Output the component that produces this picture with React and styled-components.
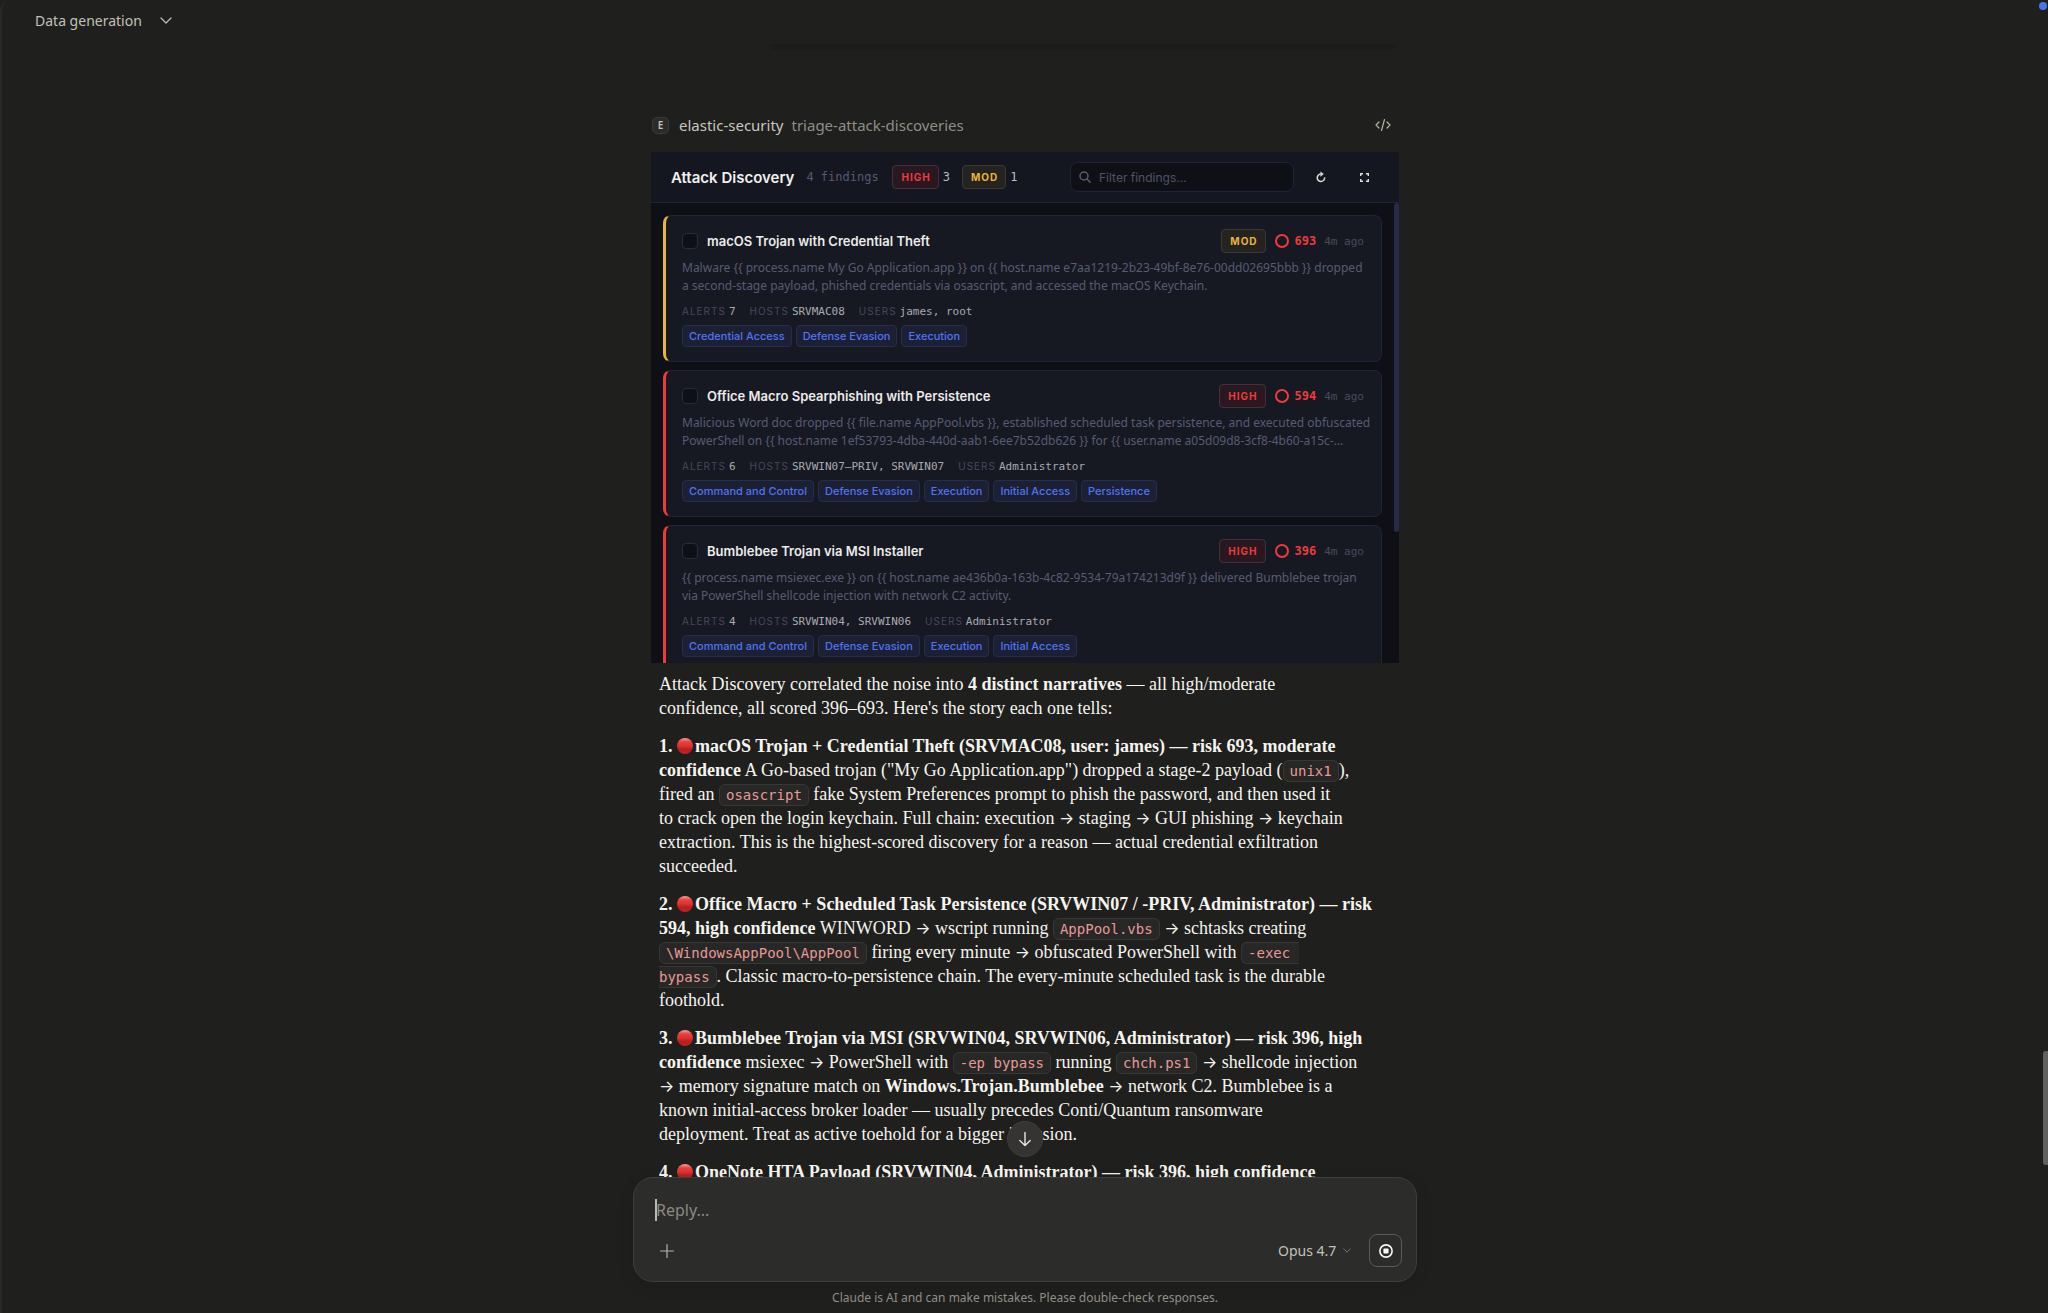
import React from "react";
import styled, { createGlobalStyle } from "styled-components";

const ui = '"Noto Sans", "Liberation Sans", sans-serif';
const inter = 'Inter, "Liberation Sans", sans-serif';
const serif = '"Liberation Serif", "Noto Sans", serif';
const mono = '"DejaVu Sans Mono", "Liberation Mono", monospace';

const Global = createGlobalStyle`
  * { box-sizing: border-box; }
  body { margin: 0; background: #1f1f1d; color: #f5f4ee; font-family: ${ui}; }
  button, input, textarea, select { font: inherit; color: inherit; margin: 0; }
  button { border: 0; padding: 0; background: none; cursor: pointer; }
  svg { display: block; }
`;

const Page = styled.div`
  position: relative;
  height: 100vh;
  display: flex;
  flex-direction: column;
  overflow: hidden;
  border-left: 2px solid #292927;
  border-top-left-radius: 10px;
  background: #1f1f1d;
`;

const TopBar = styled.header`
  flex: none;
  height: 41px;
  padding-left: 33px;
  display: flex;
  align-items: center;
`;

const ChatTitle = styled.button`
  display: flex;
  align-items: center;
  gap: 18px;
  font-size: 14px;
  line-height: 20px;
  color: #c3c1b8;
`;

const StatusDot = styled.span`
  position: absolute;
  top: 2px;
  right: 1px;
  width: 8px;
  height: 8px;
  border-radius: 50%;
  background: #4f72ea;
`;

const ScrollThumb = styled.span`
  position: absolute;
  right: 0;
  top: 1051px;
  width: 5px;
  height: 114px;
  border-radius: 3px 0 0 3px;
  background: #62615e;
`;

const Thread = styled.main`
  flex: 1;
  min-height: 0;
  overflow: hidden;
  display: flex;
  justify-content: center;
`;

const Column = styled.div`
  width: 784px;
  max-width: 100%;
  padding: 3px 18px 0;
`;

const BubbleEdge = styled.div`
  height: 6px;
  margin: 0 2px 61px 118px;
  border-radius: 0 0 6px 6px;
  background: #1c1c1d;
`;

const ToolRow = styled.div`
  height: 28px;
  margin-bottom: 13px;
  padding: 0 8px 0 1px;
  display: flex;
  align-items: center;
  font-size: 15px;
  line-height: 20px;
`;

const ToolBadge = styled.span`
  width: 17px;
  height: 17px;
  margin-right: 10px;
  border: 1px solid #3a3a37;
  border-radius: 5px;
  background: #2b2b29;
  color: #c3c1b8;
  font-size: 10px;
  font-weight: 600;
  line-height: 15px;
  text-align: center;
`;

const ToolServer = styled.span`
  margin-right: 8px;
  color: #c8c6bd;
`;

const ToolName = styled.span`
  color: #8f8e87;
`;

const IconButton = styled.button`
  display: grid;
  place-items: center;
  width: ${(p) => p.$size || 20}px;
  height: ${(p) => p.$size || 20}px;
  margin-left: ${(p) => (p.$end ? "auto" : 0)};
  color: ${(p) => p.$color || "#b5b3aa"};
`;

const Widget = styled.section`
  height: 511px;
  display: flex;
  flex-direction: column;
  overflow: hidden;
  background: #0f1015;
  font-family: ${inter};
`;

const WidgetHeader = styled.header`
  flex: none;
  height: 51px;
  padding: 0 25px 0 20px;
  display: flex;
  align-items: center;
  background: #141720;
  border-bottom: 1px solid #1f2334;
`;

const WidgetTitle = styled.h2`
  margin: 0 12px 0 0;
  font-size: 15px;
  font-weight: 600;
  color: #f1f0ec;
`;

const FindingCount = styled.span`
  width: 86px;
  font-family: ${mono};
  font-size: 12px;
  color: #545973;
`;

const tones = {
  high: { text: "#ee3a3c", bg: "#2a1820", border: "#44303a" },
  mod: { text: "#eab33c", bg: "#25231f", border: "#3d3930" },
};

const Severity = styled.span`
  height: 24px;
  padding: 0 7px 0 8px;
  display: inline-flex;
  align-items: center;
  border: 1px solid ${(p) => tones[p.$tone].border};
  border-radius: 4px;
  background: ${(p) => tones[p.$tone].bg};
  color: ${(p) => tones[p.$tone].text};
  font-size: 10px;
  font-weight: 700;
  letter-spacing: 1px;
`;

const SeverityCount = styled.span`
  margin: 0 12px 0 4px;
  font-family: ${mono};
  font-size: 12px;
  color: #b9bac2;
`;

const Search = styled.label`
  width: 224px;
  height: 30px;
  margin: 0 17px 0 auto;
  padding: 0 8px;
  display: flex;
  align-items: center;
  gap: 8px;
  border: 1px solid #1f2338;
  border-radius: 8px;
  background: #0f1015;
  color: #5a5c6b;
`;

const SearchInput = styled.input`
  flex: 1;
  min-width: 0;
  border: 0;
  padding: 0;
  outline: 0;
  background: none;
  font-size: 12px;
  &::placeholder { color: #4f5264; opacity: 1; }
`;

const HeaderActions = styled.div`
  display: flex;
  gap: 23px;
`;

const Findings = styled.div`
  position: relative;
  flex: 1;
  min-height: 0;
  overflow: hidden;
  padding: 12px 17px 0 12px;
  display: flex;
  flex-direction: column;
  gap: 8px;
`;

const FindingsThumb = styled.span`
  position: absolute;
  top: 0;
  right: 0;
  width: 5px;
  height: 329px;
  border-radius: 3px;
  background: #262c48;
`;

const Card = styled.article`
  flex: none;
  padding: 13px 17px 14px 16px;
  border: 1px solid #1f2436;
  border-left: 3px solid ${(p) => tones[p.$tone].text};
  border-radius: 8px;
  background: #161922;
`;

const CardHead = styled.div`
  height: 24px;
  margin-bottom: 6px;
  display: flex;
  align-items: center;
`;

const CardCheck = styled.label`
  display: flex;
  align-items: center;
  gap: 9px;
  margin-right: auto;
  font-size: 13px;
  font-weight: 600;
  color: #ecebe8;
`;

const Check = styled.input`
  appearance: none;
  width: 16px;
  height: 16px;
  border: 1px solid #262b42;
  border-radius: 4px;
  background: #0f1015;
`;

const Ring = styled.span`
  width: 14px;
  height: 14px;
  margin: 0 6px 0 9px;
  border: 2px solid #ee3a3c;
  border-radius: 50%;
`;

const Score = styled.strong`
  margin-right: 8px;
  font-family: ${mono};
  font-size: 12px;
  color: #ee3a3c;
`;

const Age = styled.time`
  font-family: ${mono};
  font-size: 11px;
  color: #484b5e;
`;

const Summary = styled.p`
  margin: 0 0 8px;
  font-family: ${ui};
  font-size: 12px;
  line-height: 18px;
  white-space: nowrap;
  color: #585b73;
`;

const Facts = styled.dl`
  height: 16px;
  margin: 0 0 6px;
  display: flex;
  align-items: center;
  gap: 14px;
`;

const Fact = styled.div`
  display: flex;
  align-items: center;
  gap: 3px;
`;

const FactName = styled.dt`
  font-size: 10px;
  letter-spacing: 1px;
  color: #45485d;
`;

const FactValue = styled.dd`
  margin: 0;
  font-family: ${mono};
  font-size: 11px;
  color: #a9aab0;
`;

const Tags = styled.div`
  display: flex;
  gap: 4px;
`;

const Tag = styled.span`
  height: 22px;
  padding: 0 6px;
  display: inline-flex;
  align-items: center;
  border: 1px solid #262d4a;
  border-radius: 4px;
  background: #1c2035;
  color: #5373ee;
  font-size: 11px;
  font-weight: 500;
`;

const Prose = styled.div`
  padding: 9px 0 0 8px;
  font-family: ${serif};
  font-size: 18px;
  line-height: 24px;
  white-space: nowrap;
  p { margin: 0 0 14px; }
`;

const Code = styled.code`
  padding: 2px 6px;
  border: 1px solid #373735;
  border-radius: 6px;
  background: #272725;
  color: #e59a97;
  font-family: ${mono};
  font-size: 14px;
  line-height: 16px;
`;

const Arrow = styled.span`
  font-family: ${inter};
  font-size: 16px;
  line-height: 16px;
`;

const RedDot = styled.span`
  display: inline-block;
  width: 16px;
  height: 16px;
  margin-right: 2px;
  border-radius: 50%;
  vertical-align: -2px;
  background: linear-gradient(#f3a19c 0, #e8403c 25%, #dd3330 50%, #b81f20 70%, #c02223 100%);
`;

const Footer = styled.footer`
  position: relative;
  flex: none;
  display: flex;
  flex-direction: column;
  align-items: center;
`;

const JumpButton = styled.button`
  position: absolute;
  bottom: calc(100% + 20px);
  left: 50%;
  margin-left: -18px;
  width: 36px;
  height: 36px;
  display: grid;
  place-items: center;
  border: 1px solid #3f3e3c;
  border-radius: 50%;
  background: #363432;
  color: #e8e6df;
`;

const Composer = styled.form`
  width: 784px;
  max-width: 100%;
  height: 105px;
  padding: 20px 14px 14px 22px;
  display: flex;
  flex-direction: column;
  justify-content: space-between;
  border: 1px solid #3e3e3b;
  border-radius: 20px;
  background: #2c2c2a;
  box-shadow: 0 4px 16px rgba(0, 0, 0, 0.1);
`;

const ReplyWrap = styled.div`
  position: relative;
  display: flex;
`;

const Caret = styled.span`
  position: absolute;
  left: -1px;
  top: 1px;
  width: 2px;
  height: 22px;
  background: #b9b8b2;
`;

const Reply = styled.textarea`
  flex: 1;
  height: 24px;
  padding: 0;
  border: 0;
  outline: 0;
  resize: none;
  background: none;
  font-size: 16px;
  line-height: 24px;
  &::placeholder { color: #8b8a84; opacity: 1; }
`;

const Controls = styled.div`
  display: flex;
  align-items: center;
`;

const Model = styled.label`
  margin: 0 18px 0 auto;
  display: flex;
  align-items: center;
  gap: 6px;
  color: #8b8a84;
`;

const ModelSelect = styled.select`
  appearance: none;
  border: 0;
  padding: 0;
  outline: 0;
  background: none;
  color: #c3c1b8;
  font-size: 14px;
  line-height: 20px;
`;

const StopButton = styled.button`
  width: 33px;
  height: 33px;
  display: grid;
  place-items: center;
  border: 1px solid #5a5a57;
  border-radius: 8px;
  color: #fbfaf6;
`;

const Disclaimer = styled.small`
  padding: 7px 0 6px;
  font-size: 12px;
  line-height: 18px;
  color: #8f8e87;
`;

const Chevron = ({ w = 12, h = 7 }) => (
  <svg width={w} height={h} viewBox="0 0 12 7" fill="none" stroke="currentColor" strokeWidth="1.2" strokeLinecap="round" strokeLinejoin="round">
    <path d="M1 1l5 5 5-5" />
  </svg>
);

const findings = [
  {
    tone: "mod",
    title: "macOS Trojan with Credential Theft",
    score: 693,
    lines: [
      "Malware {{ process.name My Go Application.app }} on {{ host.name e7aa1219-2b23-49bf-8e76-00dd02695bbb }} dropped",
      "a second-stage payload, phished credentials via osascript, and accessed the macOS Keychain.",
    ],
    facts: [["Alerts", "7"], ["Hosts", "SRVMAC08"], ["Users", "james, root"]],
    tags: ["Credential Access", "Defense Evasion", "Execution"],
  },
  {
    tone: "high",
    title: "Office Macro Spearphishing with Persistence",
    score: 594,
    lines: [
      "Malicious Word doc dropped {{ file.name AppPool.vbs }}, established scheduled task persistence, and executed obfuscated",
      "PowerShell on {{ host.name 1ef53793-4dba-440d-aab1-6ee7b52db626 }} for {{ user.name a05d09d8-3cf8-4b60-a15c-…",
    ],
    facts: [["Alerts", "6"], ["Hosts", "SRVWIN07–PRIV, SRVWIN07"], ["Users", "Administrator"]],
    tags: ["Command and Control", "Defense Evasion", "Execution", "Initial Access", "Persistence"],
  },
  {
    tone: "high",
    title: "Bumblebee Trojan via MSI Installer",
    score: 396,
    lines: [
      "{{ process.name msiexec.exe }} on {{ host.name ae436b0a-163b-4c82-9534-79a174213d9f }} delivered Bumblebee trojan",
      "via PowerShell shellcode injection with network C2 activity.",
    ],
    facts: [["Alerts", "4"], ["Hosts", "SRVWIN04, SRVWIN06"], ["Users", "Administrator"]],
    tags: ["Command and Control", "Defense Evasion", "Execution", "Initial Access"],
  },
];

const severityLabel = { high: "HIGH", mod: "MOD" };

function Finding({ tone, title, score, lines, facts, tags }) {
  return (
    <Card $tone={tone}>
      <CardHead>
        <CardCheck>
          <Check type="checkbox" />
          {title}
        </CardCheck>
        <Severity $tone={tone}>{severityLabel[tone]}</Severity>
        <Ring />
        <Score>{score}</Score>
        <Age>4m ago</Age>
      </CardHead>
      <Summary>
        {lines[0]}
        <br />
        {lines[1]}
      </Summary>
      <Facts>
        {facts.map(([name, value]) => (
          <Fact key={name}>
            <FactName>{name.toUpperCase()}</FactName>
            <FactValue>{value}</FactValue>
          </Fact>
        ))}
      </Facts>
      <Tags>
        {tags.map((t) => (
          <Tag key={t}>{t}</Tag>
        ))}
      </Tags>
    </Card>
  );
}

const To = () => <Arrow>→</Arrow>;

export default function App() {
  return (
    <Page>
      <Global />
      <TopBar>
        <ChatTitle type="button" aria-haspopup="menu">
          Data generation
          <Chevron />
        </ChatTitle>
      </TopBar>

      <Thread>
        <Column>
          <BubbleEdge />
          <ToolRow>
            <ToolBadge>E</ToolBadge>
            <ToolServer>elastic-security</ToolServer>
            <ToolName>triage-attack-discoveries</ToolName>
            <IconButton type="button" aria-label="View source" $end $size={16}>
              <svg width="16" height="14" viewBox="0 0 16 14" fill="none" stroke="currentColor" strokeWidth="1.2" strokeLinecap="round" strokeLinejoin="round">
                <path d="M4 4L1 7l3 3M12 4l3 3-3 3M9.5 1.5l-3 11" />
              </svg>
            </IconButton>
          </ToolRow>

          <Widget>
            <WidgetHeader>
              <WidgetTitle>Attack Discovery</WidgetTitle>
              <FindingCount>4 findings</FindingCount>
              <Severity $tone="high">HIGH</Severity>
              <SeverityCount>3</SeverityCount>
              <Severity $tone="mod">MOD</Severity>
              <SeverityCount>1</SeverityCount>
              <Search>
                <svg width="12" height="12" viewBox="0 0 12 12" fill="none" stroke="currentColor" strokeWidth="1.5" strokeLinecap="round">
                  <circle cx="5" cy="5" r="4" />
                  <path d="M8 8l3.2 3.2" />
                </svg>
                <SearchInput aria-label="Filter findings" placeholder="Filter findings..." />
              </Search>
              <HeaderActions>
                <IconButton type="button" aria-label="Refresh" $color="#dedcd4">
                  <svg width="10" height="12" viewBox="0 0 10 12" fill="none" stroke="currentColor" strokeWidth="1.5">
                    <path d="M8.6 6.4A3.7 3.7 0 1 1 4.6 3.1" />
                    <path d="M4.4 0.4L7.8 3.1L4.4 5.8z" fill="currentColor" stroke="none" />
                  </svg>
                </IconButton>
                <IconButton type="button" aria-label="Full screen" $color="#dedcd4">
                  <svg width="9" height="9" viewBox="0 0 9 9" fill="none" stroke="currentColor" strokeWidth="1.4">
                    <path d="M0.7 3V0.7H3M6 0.7h2.3V3M8.3 6v2.3H6M3 8.3H0.7V6" />
                  </svg>
                </IconButton>
              </HeaderActions>
            </WidgetHeader>
            <Findings>
              {findings.map((f) => (
                <Finding key={f.title} {...f} />
              ))}
              <FindingsThumb />
            </Findings>
          </Widget>

          <Prose>
            <p>
              Attack Discovery correlated the noise into <b>4 distinct narratives</b> — all high/moderate<br />
              confidence, all scored 396–693. Here's the story each one tells:
            </p>
            <p>
              <b>1. <RedDot />macOS Trojan + Credential Theft (SRVMAC08, user: james) — risk 693, moderate<br />
              confidence</b> A Go-based trojan ("My Go Application.app") dropped a stage-2 payload (<Code>unix1</Code>),<br />
              fired an <Code>osascript</Code> fake System Preferences prompt to phish the password, and then used it<br />
              to crack open the login keychain. Full chain: execution <To /> staging <To /> GUI phishing <To /> keychain<br />
              extraction. This is the highest-scored discovery for a reason — actual credential exfiltration<br />
              succeeded.
            </p>
            <p>
              <b>2. <RedDot />Office Macro + Scheduled Task Persistence (SRVWIN07 / -PRIV, Administrator) — risk<br />
              594, high confidence</b> WINWORD <To /> wscript running <Code>AppPool.vbs</Code> <To /> schtasks creating<br />
              <Code>\WindowsAppPool\AppPool</Code> firing every minute <To /> obfuscated PowerShell with <Code>-exec&nbsp;<br />
              bypass</Code>. Classic macro-to-persistence chain. The every-minute scheduled task is the durable<br />
              foothold.
            </p>
            <p>
              <b>3. <RedDot />Bumblebee Trojan via MSI (SRVWIN04, SRVWIN06, Administrator) — risk 396, high<br />
              confidence</b> msiexec <To /> PowerShell with <Code>-ep bypass</Code> running <Code>chch.ps1</Code> <To /> shellcode injection<br />
              <To /> memory signature match on <b>Windows.Trojan.Bumblebee</b> <To /> network C2. Bumblebee is a<br />
              known initial-access broker loader — usually precedes Conti/Quantum ransomware<br />
              deployment. Treat as active toehold for a bigger intrusion.
            </p>
            <p>
              <b>4. <RedDot />OneNote HTA Payload (SRVWIN04, Administrator) — risk 396, high confidence</b>
            </p>
          </Prose>
        </Column>
      </Thread>

      <Footer>
        <JumpButton type="button" aria-label="Scroll to bottom">
          <svg width="14" height="16" viewBox="0 0 14 16" fill="none" stroke="currentColor" strokeWidth="1.4" strokeLinecap="round" strokeLinejoin="round">
            <path d="M7 1.5v13M1.8 9.5L7 14.5l5.2-5" />
          </svg>
        </JumpButton>
        <Composer>
          <ReplyWrap>
            <Reply aria-label="Reply" placeholder="Reply..." />
            <Caret />
          </ReplyWrap>
          <Controls>
            <IconButton type="button" aria-label="Add" $size={22} $color="#b5b3aa">
              <svg width="14" height="14" viewBox="0 0 14 14" fill="none" stroke="currentColor" strokeWidth="1.2" strokeLinecap="round">
                <path d="M7 0.6v12.8M0.6 7h12.8" />
              </svg>
            </IconButton>
            <Model>
              <ModelSelect aria-label="Model">
                <option>Opus 4.7</option>
              </ModelSelect>
              <Chevron w={8} h={5} />
            </Model>
            <StopButton type="button" aria-label="Stop">
              <svg width="14" height="14" viewBox="0 0 14 14">
                <circle cx="7" cy="7" r="6.1" fill="none" stroke="currentColor" strokeWidth="1.6" />
                <rect x="4.4" y="4.4" width="5.2" height="5.2" rx="1" fill="currentColor" />
              </svg>
            </StopButton>
          </Controls>
        </Composer>
        <Disclaimer>Claude is AI and can make mistakes. Please double-check responses.</Disclaimer>
      </Footer>
      <StatusDot />
      <ScrollThumb />
    </Page>
  );
}
